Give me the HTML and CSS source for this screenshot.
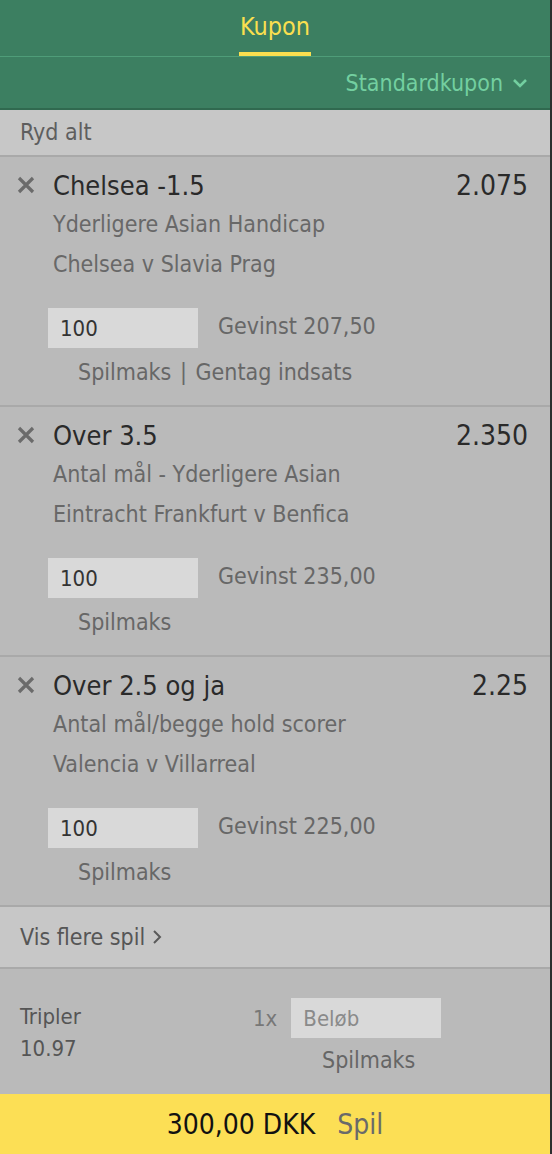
FILE: index.html
```html
<!DOCTYPE html>
<html lang="da">
<head>
  <meta charset="UTF-8">
  <meta name="viewport" content="width=device-width, initial-scale=1.0">
  <title>Kupon</title>
  <link rel="stylesheet" href="styles.css">
</head>
<body>

<div class="slip">
  <div class="tabs">
    <span class="tab active">Kupon</span>
  </div>
  <div class="mode">
    <span>Standardkupon</span>
    <svg class="caret" width="16" height="10" viewBox="0 0 16 10"><path d="M2 2 L8 8 L14 2" fill="none" stroke="#73cfa0" stroke-width="2.6"/></svg>
  </div>
  <div class="clear">Ryd alt</div>

  <div class="bet">
    <div class="bet-head">
      <svg class="remove" width="20" height="20" viewBox="0 0 20 20"><path d="M3 3 L17 17 M17 3 L3 17" stroke="#6b6b6b" stroke-width="3.2"/></svg>
      <span class="pick">Chelsea -1.5</span>
      <span class="odds">2.075</span>
    </div>
    <div class="market">Yderligere Asian Handicap</div>
    <div class="market">Chelsea v Slavia Prag</div>
    <div class="stake-row">
      <div class="stake">100</div>
      <span class="win">Gevinst 207,50</span>
    </div>
    <div class="links">Spilmaks <span class="sep">|</span> Gentag indsats</div>
  </div>

  <div class="bet">
    <div class="bet-head">
      <svg class="remove" width="20" height="20" viewBox="0 0 20 20"><path d="M3 3 L17 17 M17 3 L3 17" stroke="#6b6b6b" stroke-width="3.2"/></svg>
      <span class="pick">Over 3.5</span>
      <span class="odds">2.350</span>
    </div>
    <div class="market">Antal mål - Yderligere Asian</div>
    <div class="market">Eintracht Frankfurt v Benfica</div>
    <div class="stake-row">
      <div class="stake">100</div>
      <span class="win">Gevinst 235,00</span>
    </div>
    <div class="links">Spilmaks</div>
  </div>

  <div class="bet">
    <div class="bet-head">
      <svg class="remove" width="20" height="20" viewBox="0 0 20 20"><path d="M3 3 L17 17 M17 3 L3 17" stroke="#6b6b6b" stroke-width="3.2"/></svg>
      <span class="pick">Over 2.5 og ja</span>
      <span class="odds">2.25</span>
    </div>
    <div class="market">Antal mål/begge hold scorer</div>
    <div class="market">Valencia v Villarreal</div>
    <div class="stake-row">
      <div class="stake">100</div>
      <span class="win">Gevinst 225,00</span>
    </div>
    <div class="links">Spilmaks</div>
  </div>

  <div class="more">
    <span>Vis flere spil</span>
    <svg width="10" height="16" viewBox="0 0 10 16"><path d="M2 2 L8 8 L2 14" fill="none" stroke="#5a5a5a" stroke-width="2"/></svg>
  </div>

  <div class="multi">
    <div class="multi-name">
      <div>Tripler</div>
      <div>10.97</div>
    </div>
    <div class="multi-stake">
      <div class="multi-row">
        <span class="count">1x</span>
        <div class="stake placeholder">Beløb</div>
      </div>
      <div class="multi-max">Spilmaks</div>
    </div>
  </div>

  <div class="place">
    <span class="total">300,00 DKK</span>
    <span class="go">Spil</span>
  </div>
</div>

</body>
</html>
```

FILE: styles.css
```css
body {
  margin: 0;
  background-color: #2e2e2e;
  font-family: "DejaVu Sans Condensed", "DejaVu Sans", sans-serif;
  font-stretch: condensed;
}

.slip {
  width: 550px;
  height: 1154px;
  background-color: #bababa;
  display: flex;
  flex-direction: column;
}

.tabs {
  height: 56px;
  flex-shrink: 0;
  background-color: #3c7f61;
  border-bottom: 1px solid #4f9d79;
  display: flex;
  justify-content: center;
}

.tab {
  color: #fadf4f;
  font-size: 25px;
  box-sizing: border-box;
  height: 56px;
  padding: 0 1px;
  border-bottom: 4px solid #fadf4f;
  line-height: 54px;
}

.mode {
  height: 51px;
  flex-shrink: 0;
  background-color: #3c7f61;
  border-bottom: 2px solid #30694f;
  display: flex;
  align-items: center;
  justify-content: flex-end;
  gap: 9px;
  padding-right: 22px;
  color: #73cfa0;
  font-size: 23px;
}

.clear {
  height: 45px;
  flex-shrink: 0;
  line-height: 45px;
  background-color: #c7c7c7;
  border-bottom: 2px solid #a9a9a9;
  padding-left: 20px;
  color: #5e5e5e;
  font-size: 23px;
}

.bet {
  height: 236px;
  flex-shrink: 0;
  padding: 12px 22px 0 16px;
  border-bottom: 2px solid #a9a9a9;
}

.bet-head {
  display: flex;
  align-items: center;
  height: 32px;
  margin-bottom: 3px;
}

.remove {
  margin-right: 17px;
}

.pick {
  flex: 1;
  color: #2a2a2a;
  font-size: 27px;
}

.odds {
  color: #2a2a2a;
  font-size: 28px;
}

.market {
  padding-left: 37px;
  line-height: 40px;
  color: #686868;
  font-size: 23px;
}

.stake-row {
  display: flex;
  align-items: center;
  margin-top: 24px;
  padding-left: 32px;
}

.stake {
  width: 150px;
  height: 40px;
  line-height: 42px;
  box-sizing: border-box;
  padding-left: 12px;
  background-color: #d9d9d9;
  color: #333;
  font-size: 22px;
}

.win {
  margin-left: 20px;
  margin-top: -4px;
  color: #676767;
  font-size: 23px;
}

.links {
  margin-top: 8px;
  padding-left: 62px;
  line-height: 32px;
  color: #676767;
  font-size: 23px;
}

.sep {
  padding: 0 2px;
}

.more {
  height: 60px;
  flex-shrink: 0;
  background-color: #c7c7c7;
  border-bottom: 2px solid #a9a9a9;
  display: flex;
  align-items: center;
  gap: 7px;
  padding-left: 20px;
  color: #565656;
  font-size: 23px;
}

.multi {
  flex: 1;
  display: flex;
  padding: 32px 0 0 20px;
}

.multi-name {
  width: 212px;
  line-height: 32px;
  color: #555;
  font-size: 22px;
}

.multi-stake {
  display: flex;
  flex-direction: column;
}

.multi-row {
  display: flex;
  align-items: center;
  gap: 14px;
  margin-top: -3px;
}

.count {
  color: #777;
  font-size: 22px;
  margin-left: 21px;
}

.placeholder {
  color: #8a8a8a;
}

.multi-max {
  margin-left: 90px;
  line-height: 44px;
  color: #666;
  font-size: 23px;
}

.place {
  height: 60px;
  flex-shrink: 0;
  background-color: #fcdf55;
  display: flex;
  align-items: center;
  justify-content: center;
  gap: 22px;
  font-size: 28px;
}

.total {
  color: #111;
}

.go {
  color: #6a6a6a;
}
```
